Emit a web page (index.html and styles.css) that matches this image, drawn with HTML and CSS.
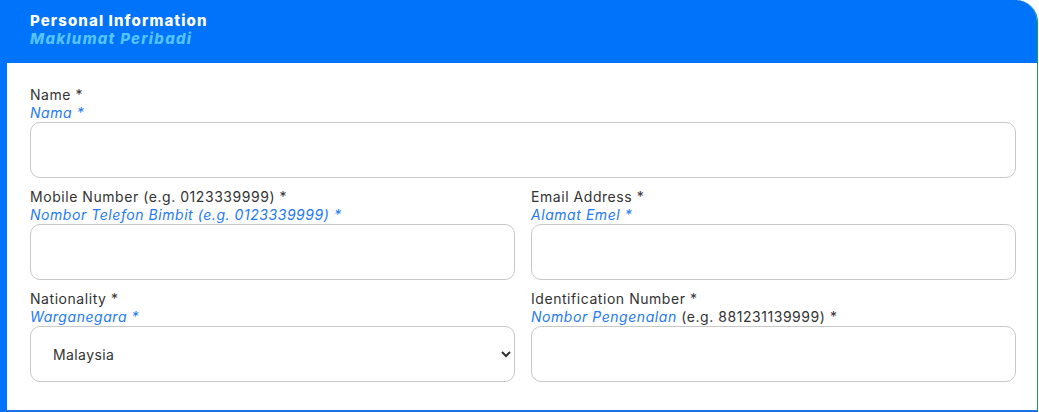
FILE: index.html
```html
<!DOCTYPE html>
<html lang="en">
<head>
    <meta charset="UTF-8">
    <meta name="viewport" content="width=device-width, initial-scale=1.0">
    <title>Personal Information</title>
    <link rel="stylesheet" href="styles.css">
</head>
<body>
    <div class="card">
        <div class="card-header">
            <div class="title">Personal Information</div>
            <div class="subtitle">Maklumat Peribadi</div>
        </div>

        <div class="card-body">
            <div class="field full">
                <label for="name">Name *<span class="ms">Nama *</span></label>
                <input type="text" id="name">
            </div>

            <div class="field">
                <label for="mobile">Mobile Number (e.g. 0123339999) *<span class="ms">Nombor Telefon Bimbit (e.g. 0123339999) *</span></label>
                <input type="text" id="mobile">
            </div>

            <div class="field">
                <label for="email">Email Address *<span class="ms">Alamat Emel *</span></label>
                <input type="email" id="email">
            </div>

            <div class="field">
                <label for="nationality">Nationality *<span class="ms">Warganegara *</span></label>
                <select id="nationality">
                    <option>Malaysia</option>
                    <option>Others</option>
                </select>
            </div>

            <div class="field">
                <label for="ic">Identification Number *<span class="line"><span class="ms-inline">Nombor Pengenalan</span> (e.g. 881231139999) *</span></label>
                <input type="text" id="ic">
            </div>
        </div>
    </div>
</body>
</html>
```

FILE: styles.css
```css
body {
    margin: 0;
    font-family: Inter, "Open Sans", sans-serif;
    color: #333;
    background: #fff;
}
.card {
    width: 1030px;
    height: 410px;
    border-left: 7px solid #0073fb;
    border-right: 1px solid #1d9a4c;
    border-bottom: 2px solid #1a73e8;
    border-top-right-radius: 22px;
    overflow: hidden;
}
.card-header {
    background: #0073fb;
    height: 63px;
    box-sizing: border-box;
    padding: 11px 23px 0 23px;
}
.title {
    color: #fff;
    font-weight: 800;
    font-size: 15px;
    line-height: 19px;
    letter-spacing: 1.1px;
}
.subtitle {
    color: #55c3ff;
    font-weight: 800;
    font-style: italic;
    font-size: 15px;
    line-height: 18px;
    letter-spacing: 1.25px;
}
.card-body {
    display: grid;
    grid-template-columns: 1fr 1fr;
    column-gap: 16px;
    row-gap: 10px;
    padding: 23px 21px 28px 23px;
}
.field.full {
    grid-column: 1 / 3;
}
label {
    display: block;
    font-size: 14px;
    line-height: 18px;
    letter-spacing: 0.55px;
}
label .ms,
label .line {
    display: block;
}
.ms,
.ms-inline {
    color: #2479f5;
    font-style: italic;
}
input, select {
    display: block;
    width: 100%;
    box-sizing: border-box;
    height: 56px;
    border: 1px solid #c8c8c8;
    border-radius: 10px;
    background: #fff;
    font-family: inherit;
    font-size: 14px;
    letter-spacing: 0.4px;
    color: #333;
    padding: 0 18px;
}
select {
    cursor: pointer;
}
```
